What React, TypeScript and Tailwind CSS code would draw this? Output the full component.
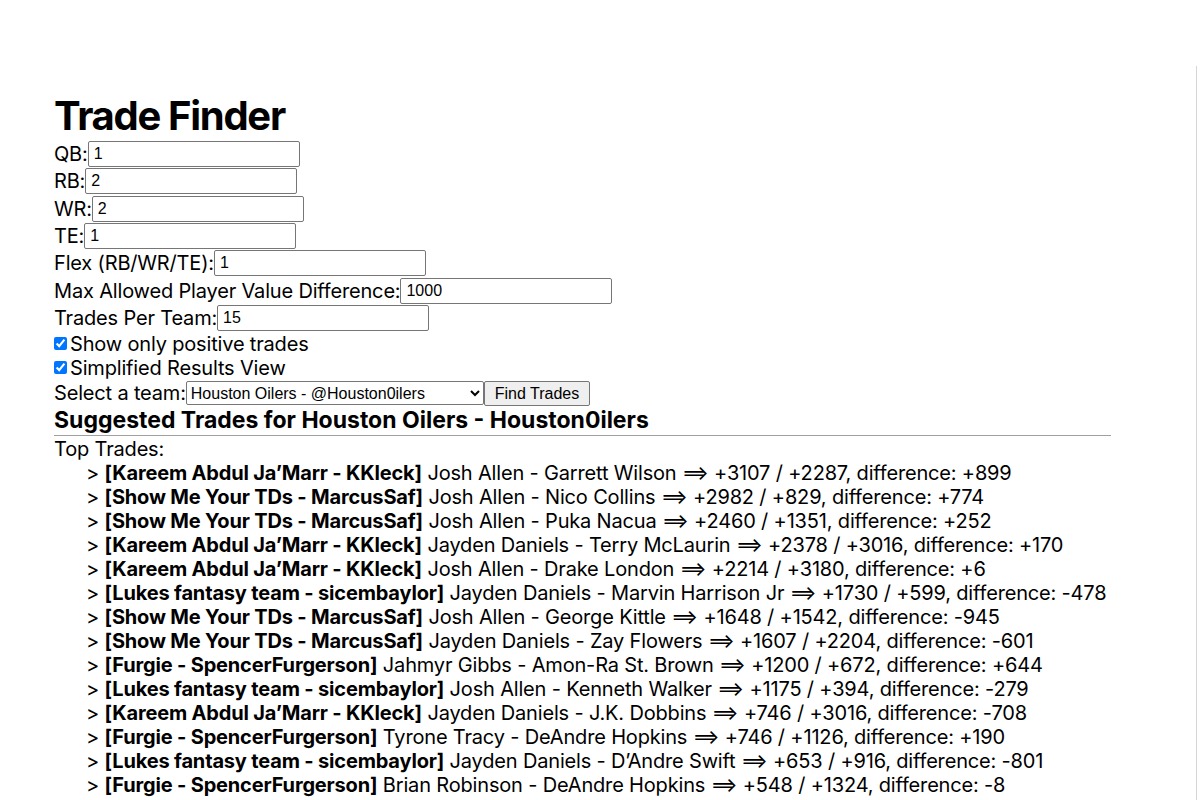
import { type ReactElement } from 'react';

/**
 * One suggested trade row
 */
interface Trade {
  team: string;
  give: string;
  get: string;
  values: string;
  diff: string;
}

const trades: Trade[] = [
  { team: 'Kareem Abdul Ja’Marr - KKleck', give: 'Josh Allen', get: 'Garrett Wilson', values: '+3107 / +2287', diff: '+899' },
  { team: 'Show Me Your TDs - MarcusSaf', give: 'Josh Allen', get: 'Nico Collins', values: '+2982 / +829', diff: '+774' },
  { team: 'Show Me Your TDs - MarcusSaf', give: 'Josh Allen', get: 'Puka Nacua', values: '+2460 / +1351', diff: '+252' },
  { team: 'Kareem Abdul Ja’Marr - KKleck', give: 'Jayden Daniels', get: 'Terry McLaurin', values: '+2378 / +3016', diff: '+170' },
  { team: 'Kareem Abdul Ja’Marr - KKleck', give: 'Josh Allen', get: 'Drake London', values: '+2214 / +3180', diff: '+6' },
  { team: 'Lukes fantasy team - sicembaylor', give: 'Jayden Daniels', get: 'Marvin Harrison Jr', values: '+1730 / +599', diff: '-478' },
  { team: 'Show Me Your TDs - MarcusSaf', give: 'Josh Allen', get: 'George Kittle', values: '+1648 / +1542', diff: '-945' },
  { team: 'Show Me Your TDs - MarcusSaf', give: 'Jayden Daniels', get: 'Zay Flowers', values: '+1607 / +2204', diff: '-601' },
  { team: 'Furgie - SpencerFurgerson', give: 'Jahmyr Gibbs', get: 'Amon-Ra St. Brown', values: '+1200 / +672', diff: '+644' },
  { team: 'Lukes fantasy team - sicembaylor', give: 'Josh Allen', get: 'Kenneth Walker', values: '+1175 / +394', diff: '-279' },
  { team: 'Kareem Abdul Ja’Marr - KKleck', give: 'Jayden Daniels', get: 'J.K. Dobbins', values: '+746 / +3016', diff: '-708' },
  { team: 'Furgie - SpencerFurgerson', give: 'Tyrone Tracy', get: 'DeAndre Hopkins', values: '+746 / +1126', diff: '+190' },
  { team: 'Lukes fantasy team - sicembaylor', give: 'Jayden Daniels', get: 'D’Andre Swift', values: '+653 / +916', diff: '-801' },
  { team: 'Furgie - SpencerFurgerson', give: 'Brian Robinson', get: 'DeAndre Hopkins', values: '+548 / +1324', diff: '-8' },
  { team: 'Show Me Your TDs - MarcusSaf', give: 'Jayden Daniels', get: 'Nico Collins', values: '+512 / +829', diff: '-317' },
];

const fields: { label: string; value: string }[] = [
  { label: 'QB:', value: '1' },
  { label: 'RB:', value: '2' },
  { label: 'WR:', value: '2' },
  { label: 'TE:', value: '1' },
  { label: 'Flex (RB/WR/TE):', value: '1' },
  { label: 'Max Allowed Player Value Difference:', value: '1000' },
  { label: 'Trades Per Team:', value: '15' },
];

/**
 * Trade finder page
 */
export default function App(): ReactElement {
  return (
    <div className="bg-white text-black pt-[66px] font-['Inter',sans-serif] text-[20px] tracking-[-0.17px]">
      <div className="w-[1197px] border-r border-[#d6d6d6] pt-[26px] pl-[54px]">
        <h1 className="text-[40px] font-bold leading-[48.4px] tracking-[-1.3px]">Trade Finder</h1>

        {fields.map((f) => (
          <div key={f.label} className="flex items-center h-[27.33px]">
            <span>{f.label}</span>
            <input
              type="text"
              defaultValue={f.value}
              className="w-[212px] h-[26px] pl-[5px] pr-[2px] border border-[#767676] rounded-[2px] text-[16px] tracking-normal font-['Liberation_Sans',Arial,sans-serif] outline-none"
            />
          </div>
        ))}

        <label className="flex items-center h-[24px]">
          <input type="checkbox" defaultChecked className="m-0 mr-[3px] w-[13px] h-[13px]" />
          <span>Show only positive trades</span>
        </label>
        <label className="flex items-center h-[24px]">
          <input type="checkbox" defaultChecked className="m-0 mr-[3px] w-[13px] h-[13px]" />
          <span>Simplified Results View</span>
        </label>

        <div className="flex items-center h-[27px]">
          <span>Select a team:</span>
          <select
            defaultValue="ho"
            className="w-[298px] h-[24px] border border-[#767676] rounded-[2px] text-[16px] tracking-normal font-['Liberation_Sans',Arial,sans-serif] bg-white"
          >
            <option value="ho">Houston Oilers - @Houston0ilers</option>
          </select>
          <button className="h-[25px] px-[10px] border border-[#767676] rounded-[2px] bg-[#efefef] text-[16px] tracking-normal font-['Liberation_Sans',Arial,sans-serif]">
            Find Trades
          </button>
        </div>

        <div className="w-[1057px]">
          <h3 className="text-[23px] font-bold leading-[27px] tracking-normal">Suggested Trades for Houston Oilers - Houston0ilers</h3>
          <div className="h-px bg-[#a0a0a0] mt-[1px]" />
          <div className="leading-[24px] mt-px">Top Trades:</div>
          <ul className="leading-[24px] pl-[32px] pb-10">
            {trades.map((t, i) => (
              <li key={i} className="whitespace-nowrap">
                {'> '}
                <b>[{t.team}]</b> {t.give} - {t.get} ⟹ {t.values}, difference: {t.diff}
              </li>
            ))}
          </ul>
        </div>
      </div>
    </div>
  );
}
